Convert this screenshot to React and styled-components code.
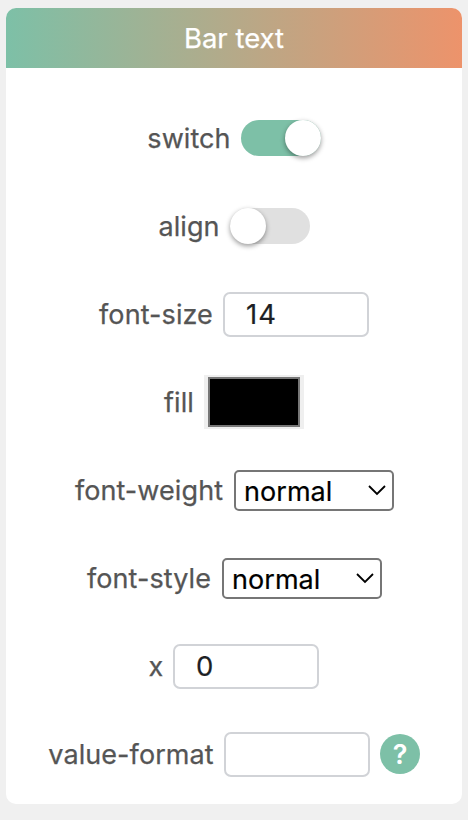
import React from "react";
import styled, { createGlobalStyle } from "styled-components";

const GlobalStyle = createGlobalStyle`
  * { box-sizing: border-box; }
  body { margin: 0; background: #f0f0f0; font-family: Inter, "Liberation Sans", sans-serif; }
`;

const Page = styled.main`
  height: 820px;
  padding: 8px 6px 16px;
`;

const Card = styled.section`
  height: 796px;
  border-radius: 10px;
  background: #fff;
  overflow: hidden;
`;

const Header = styled.header`
  height: 60px;
  display: flex;
  align-items: center;
  justify-content: center;
  background: linear-gradient(90deg, #7dc0a7, #ed936b);
  color: #fff;
  font-size: 27.5px;
  letter-spacing: 0;
  -webkit-text-stroke: 0.25px currentColor;
`;

const Form = styled.div`
  padding-top: 26px;
`;

const Row = styled.div`
  height: 88px;
  display: flex;
  align-items: center;
  justify-content: center;
  gap: 10px;
`;

const Label = styled.label`
  width: ${(p) => p.$width}px;
  display: flex;
  justify-content: center;
  white-space: nowrap;
  color: #555;
  font-size: 27px;
  letter-spacing: 0.08px;
  -webkit-text-stroke: 0.25px currentColor;
`;

const Track = styled.span`
  width: 80px;
  height: 36px;
  display: flex;
  justify-content: ${(p) => (p.$on ? "flex-end" : "flex-start")};
  border-radius: 18px;
  background: ${(p) => (p.$on ? "#7dc0a7" : "#e0e0e0")};
`;

const Knob = styled.span`
  width: 36px;
  height: 36px;
  border-radius: 50%;
  background: #fff;
  box-shadow: 0 2px 5px rgba(0, 0, 0, 0.4);
`;

const TextInput = styled.input`
  width: 146px;
  height: 45px;
  margin: 0;
  padding: 0 21px;
  border: 2px solid #d1d3d7;
  border-radius: 7px;
  outline: none;
  background: #fff;
  color: #1d1f25;
  font: 27.5px Inter, sans-serif;
  letter-spacing: 1px;
  -webkit-text-stroke: 0.2px currentColor;
`;

const Swatch = styled.span`
  width: 100px;
  height: 54px;
  padding: 2px 4px;
  background: #efefef;
`;

const SwatchColor = styled.span`
  display: block;
  height: 50px;
  border: 2px solid #777;
  background: #000;
`;

const SelectBox = styled.div`
  width: 160px;
  height: 41px;
  padding: 2px 6px 0 8px;
  display: flex;
  align-items: center;
  justify-content: space-between;
  border: 2px solid #767676;
  border-radius: 5px;
  background: #fff;
  color: #000;
  font-size: 27px;
  letter-spacing: 0.05px;
  -webkit-text-stroke: 0.2px currentColor;
`;

const Help = styled.span`
  width: 40px;
  height: 40px;
  display: flex;
  align-items: center;
  justify-content: center;
  border-radius: 50%;
  background: #7dc0a7;
  color: #fff;
  font-size: 27px;
  font-weight: 600;
`;

const Chevron = () => (
  <svg width="18" height="12" viewBox="0 0 18 12" fill="none" stroke="#000" strokeWidth="1.8">
    <path d="M1 1 L9 9 L17 1" />
  </svg>
);

const Switch = ({ on }) => (
  <Track $on={on} role="switch" aria-checked={on}>
    <Knob />
  </Track>
);

const Select = ({ value }) => (
  <SelectBox role="combobox">
    {value}
    <Chevron />
  </SelectBox>
);

export default function App() {
  return (
    <>
      <GlobalStyle />
      <Page>
        <Card>
          <Header>Bar text</Header>
          <Form>
            <Row><Label $width={84}>switch</Label><Switch on /></Row>
            <Row><Label $width={62}>align</Label><Switch on={false} /></Row>
            <Row><Label $width={114}>font-size</Label><TextInput defaultValue="14" /></Row>
            <Row><Label $width={30}>fill</Label><Swatch><SwatchColor /></Swatch></Row>
            <Row><Label $width={150}>font-weight</Label><Select value="normal" /></Row>
            <Row><Label $width={126}>font-style</Label><Select value="normal" /></Row>
            <Row><Label $width={14}>x</Label><TextInput defaultValue="0" /></Row>
            <Row><Label $width={166}>value-format</Label><TextInput defaultValue="" /><Help>?</Help></Row>
          </Form>
        </Card>
      </Page>
    </>
  );
}
